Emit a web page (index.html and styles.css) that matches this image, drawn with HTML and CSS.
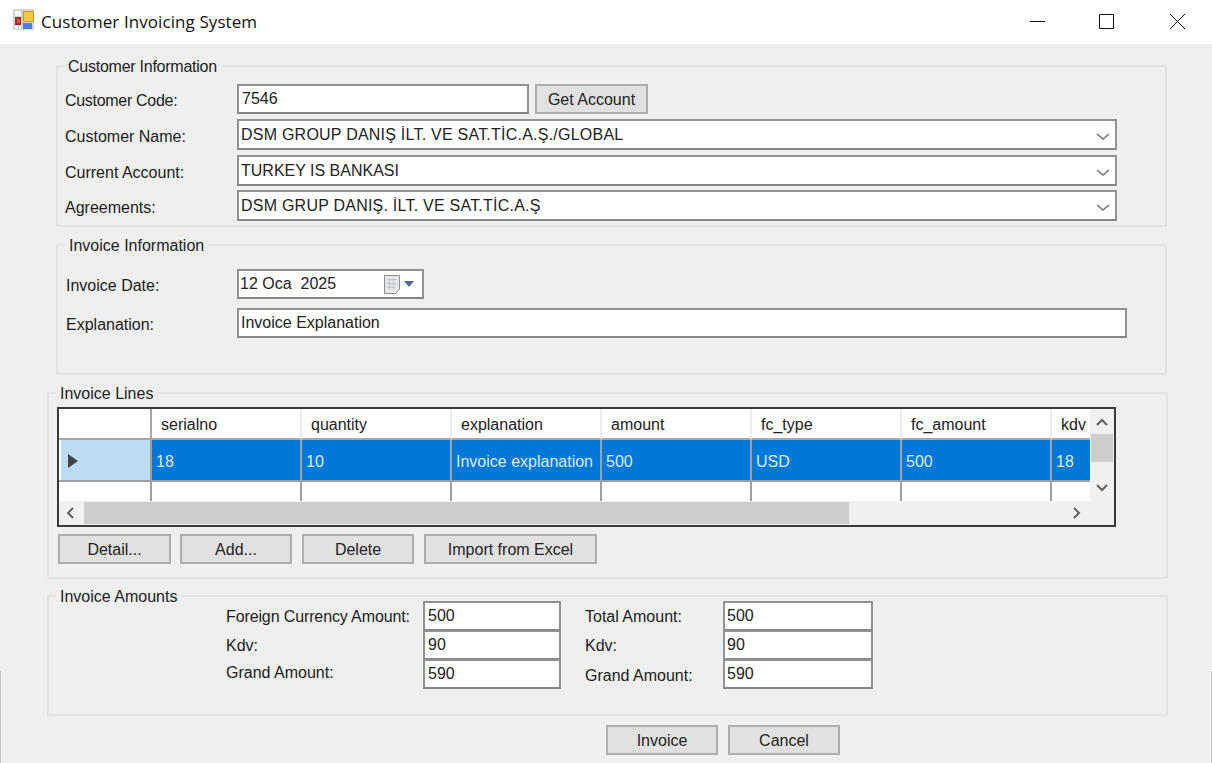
FILE: index.html
```html
<!DOCTYPE html>
<html lang="en">
  <head>
    <meta charset="UTF-8" />
    <title>Customer Invoicing System</title>
    <link rel="stylesheet" href="styles.css">
  </head>
  <body>
    <header class="titlebar">
      <svg class="app-icon" width="21" height="21" viewBox="0 0 21 21">
        <rect width="21" height="21" fill="#d4d4d4" />
        <rect x="2" y="2" width="6" height="5" fill="#f7f7f7" />
        <rect x="2" y="17" width="3" height="3" fill="#f7f7f7" />
        <rect x="6" y="17" width="2" height="3" fill="#f7f7f7" />
        <rect x="10" y="2" width="11" height="11" fill="#c69a1e" />
        <rect x="11" y="3" width="9" height="9" fill="#f5c93e" />
        <rect x="2" y="8" width="6" height="8" fill="#a82a22" />
        <rect x="4" y="10" width="3" height="4" fill="#d8524a" />
        <rect x="10" y="14" width="9" height="6" fill="#4a80d8" />
      </svg>
      <span class="app-title">Customer Invoicing System</span>
      <div class="window-buttons">
        <svg width="15" height="15" viewBox="0 0 15 15"><path d="M0 7.5H15" stroke="#111" fill="none" /></svg>
        <svg width="15" height="15" viewBox="0 0 15 15"><path d="M.5 .5H14.500V14.500H.5Z" stroke="#111" fill="none" /></svg>
        <svg class="close-icon" width="15" height="15" viewBox="0 0 15 15"><path d="M0 0L15 15M15 0L0 15" stroke="#111" fill="none" /></svg>
      </div>
    </header>

    <main class="content">
      <fieldset class="group group-customer">
        <legend>Customer Information</legend>
        <div class="row row-code">
          <label>Customer Code:</label>
          <div class="field field-code">7546</div>
          <button class="btn btn-account">Get Account</button>
        </div>
        <div class="row row-name">
          <label>Customer Name:</label>
          <div class="field combo combo-spaced">DSM GROUP DANIŞ İLT. VE SAT.TİC.A.Ş./GLOBAL
            <svg width="14" height="7" viewBox="0 0 14 7"><path d="M1 1L7 6L13 1" stroke="#777" stroke-width="1.600" fill="none" /></svg>
          </div>
        </div>
        <div class="row row-account">
          <label>Current Account:</label>
          <div class="field combo">TURKEY IS BANKASI
            <svg width="14" height="7" viewBox="0 0 14 7"><path d="M1 1L7 6L13 1" stroke="#777" stroke-width="1.600" fill="none" /></svg>
          </div>
        </div>
        <div class="row row-agreement">
          <label>Agreements:</label>
          <div class="field combo combo-spaced">DSM GRUP DANIŞ. İLT. VE SAT.TİC.A.Ş
            <svg width="14" height="7" viewBox="0 0 14 7"><path d="M1 1L7 6L13 1" stroke="#777" stroke-width="1.600" fill="none" /></svg>
          </div>
        </div>
      </fieldset>

      <fieldset class="group group-invoice">
        <legend>Invoice Information</legend>
        <div class="row row-date">
          <label>Invoice Date:</label>
          <div class="field field-date">
            <span>12 Oca&nbsp; 2025</span>
            <svg class="cal-icon" width="30" height="19" viewBox="0 0 30 19">
              <path d="M.5 .5H15.500V14L12 18.500H.5Z" fill="#e6e6e6" stroke="#8f8f8f" />
              <path d="M3 4.500H13M3 8.500H13M3 12.500H11M5.500 3V15M9.500 3V15" stroke="#c3c8d0" fill="none" />
              <path d="M20 6H30L25 12Z" fill="#4b6c94" />
            </svg>
          </div>
        </div>
        <div class="row row-explain">
          <label>Explanation:</label>
          <div class="field field-explain">Invoice Explanation</div>
        </div>
      </fieldset>

      <fieldset class="group group-wide group-lines">
        <legend>Invoice Lines</legend>
        <div class="grid-frame">
          <div class="grid-data">
            <table>
              <thead>
                <tr>
                  <th class="row-head"></th>
                  <th>serialno</th>
                  <th>quantity</th>
                  <th>explanation</th>
                  <th>amount</th>
                  <th>fc_type</th>
                  <th>fc_amount</th>
                  <th>kdv</th>
                </tr>
              </thead>
              <tbody>
                <tr class="selected">
                  <td class="row-head"><span class="row-arrow"></span></td>
                  <td>18</td>
                  <td>10</td>
                  <td>Invoice explanation</td>
                  <td>500</td>
                  <td>USD</td>
                  <td>500</td>
                  <td>18</td>
                </tr>
                <tr class="new-row">
                  <td class="row-head"></td>
                  <td></td><td></td><td></td><td></td><td></td><td></td><td></td>
                </tr>
              </tbody>
            </table>
          </div>
          <div class="vscroll">
            <svg width="12" height="8" viewBox="0 0 12 8"><path d="M1 7L6 2L11 7" stroke="#606060" stroke-width="2" fill="none" /></svg>
            <div class="vthumb"></div>
            <svg class="vdown" width="12" height="8" viewBox="0 0 12 8"><path d="M1 1L6 6L11 1" stroke="#606060" stroke-width="2" fill="none" /></svg>
          </div>
          <div class="hscroll">
            <svg width="8" height="12" viewBox="0 0 8 12"><path d="M7 1L2 6L7 11" stroke="#606060" stroke-width="2" fill="none" /></svg>
            <div class="hthumb"></div>
            <svg width="8" height="12" viewBox="0 0 8 12"><path d="M1 1L6 6L1 11" stroke="#606060" stroke-width="2" fill="none" /></svg>
          </div>
          <div class="corner"></div>
        </div>
        <div class="line-buttons">
          <button class="btn btn-line btn-detail">Detail...</button>
          <button class="btn btn-line">Add...</button>
          <button class="btn btn-line">Delete</button>
          <button class="btn btn-excel">Import from Excel</button>
        </div>
      </fieldset>

      <fieldset class="group group-wide group-amounts">
        <legend>Invoice Amounts</legend>
        <div class="amounts">
          <div class="amount-col col-foreign">
            <div class="amount-row"><label class="label-foreign">Foreign Currency Amount:</label><div class="field">500</div></div>
            <div class="amount-row"><label>Kdv:</label><div class="field">90</div></div>
            <div class="amount-row"><label class="raise">Grand Amount:</label><div class="field">590</div></div>
          </div>
          <div class="amount-col col-total">
            <div class="amount-row"><label>Total Amount:</label><div class="field">500</div></div>
            <div class="amount-row"><label>Kdv:</label><div class="field">90</div></div>
            <div class="amount-row"><label class="raise-small">Grand Amount:</label><div class="field">590</div></div>
          </div>
        </div>
      </fieldset>

      <div class="footer-buttons">
        <button class="btn btn-line">Invoice</button>
        <button class="btn btn-line">Cancel</button>
      </div>
    </main>
  </body>
</html>
```

FILE: styles.css
```css
* {
  box-sizing: border-box;
}

html,
body {
  height: 100%;
}

body {
  margin: 0;
  background-color: #efefef;
  color: #1c1c1c;
  font-family: "Liberation Sans", Arial, sans-serif;
  font-size: 16px;
  overflow: hidden;
  position: relative;
}

/* thin window edge at the bottom corners */
body::before,
body::after {
  content: "";
  position: absolute;
  top: 671px;
  bottom: 0;
  width: 1px;
  background-color: #c4c4c4;
}

body::before {
  left: 0;
}

body::after {
  right: 0;
}

.titlebar {
  height: 44px;
  background-color: white;
  display: flex;
  align-items: center;
  padding-left: 13px;
}

.app-icon {
  margin-top: -5px;
}

.app-title {
  margin: -2px 0 0 7px;
  font-family: "Open Sans", sans-serif;
  font-size: 17px;
  letter-spacing: 0.08px;
  color: #111;
}

.window-buttons {
  margin-left: auto;
  display: flex;
  gap: 54px;
  padding-right: 27px;
  margin-top: -2px;
}

.close-icon {
  margin-left: 2px;
}

.group {
  margin: 9px 0 0 56px;
  width: 1111px;
  padding: 0 7px;
  border: 2px solid #e3e3e3;
  min-width: 0;
}

.group legend {
  margin-left: 0;
  padding: 0 4px;
  height: 18px;
  line-height: 20px;
  color: #222;
}

.group-customer legend {
  margin-left: -1px;
  letter-spacing: -0.25px;
}

.group-customer {
  margin-top: 13px;
  height: 170px;
  padding-top: 9px;
}

.group-invoice {
  height: 139px;
  padding-top: 15px;
}

.group-wide {
  margin-left: 47px;
  width: 1121px;
  padding: 0 8px;
}

.group-wide legend {
  margin-left: -1px;
}

.group-lines {
  height: 195px;
  padding-top: 5px;
}

.group-amounts {
  margin-top: 8px;
  height: 129px;
}

.row {
  display: flex;
  align-items: center;
}

.row label {
  width: 172px;
  flex: none;
  padding-top: 4px;
}

.row-code label {
  letter-spacing: -0.3px;
}

.row-name {
  margin-top: 5px;
}

.row-account {
  margin-top: 5px;
}

.row-agreement {
  margin-top: 4px;
}

.row-date label,
.row-explain label {
  margin-left: 1px;
  width: 171px;
}

.row-explain {
  margin-top: 9px;
}

.field {
  height: 30px;
  background-color: white;
  border: 2px solid #929292;
  border-bottom-color: #858585;
  padding: 0 3px;
  display: flex;
  align-items: center;
  color: #222;
  white-space: nowrap;
}

.field-code {
  width: 292px;
}

.combo {
  width: 880px;
  height: 31px;
  justify-content: space-between;
  padding-left: 2px;
  padding-right: 5px;
}

.combo-spaced {
  letter-spacing: 0.23px;
}

.combo svg {
  margin-top: 3px;
}

.field-date {
  width: 187px;
  padding-left: 1px;
  justify-content: space-between;
  padding-right: 8px;
}

.cal-icon {
  margin-top: 0;
}

.field-explain {
  width: 890px;
  padding-left: 2px;
}

.btn {
  height: 30px;
  background-color: #e1e1e1;
  border: 2px solid #adadad;
  color: #222;
  font-family: inherit;
  font-size: 16px;
  padding: 2px 0 0;
}

.btn-account {
  width: 113px;
  margin: -1px 0 0 6px;
}

.btn-line {
  width: 112px;
}

.btn-detail {
  width: 113px;
  margin-right: -1px;
}

.btn-excel {
  width: 173px;
}

.grid-frame {
  width: 1059px;
  height: 120px;
  border: 2px solid #3a3a3a;
  background-color: #f0f0f0;
  display: grid;
  grid-template-columns: 1031px 24px;
  grid-template-rows: 92px 24px;
}

.grid-data {
  overflow: hidden;
  background-color: white;
}

table {
  border-collapse: separate;
  border-spacing: 0;
  table-layout: fixed;
  width: 1143px;
}

th,
td {
  width: 150px;
  padding: 0;
  text-align: left;
  font-weight: normal;
  white-space: nowrap;
  overflow: hidden;
}

th {
  height: 31px;
  padding: 3px 0 0 9px;
  border-right: 2px solid #ececec;
  border-bottom: 2px solid #a8a8a8;
  color: #222;
}

th.row-head {
  width: 93px;
  border-right-color: #a8a8a8;
}

td {
  height: 42px;
  padding: 3px 0 0 4px;
  border-right: 2px solid #a0a0a0;
  border-bottom: 2px solid #a0a0a0;
}

td.row-head {
  width: 93px;
  padding: 0 0 0 2px;
}

.selected td {
  background-color: #0078d7;
  color: #dcecfa;
}

.selected td.row-head {
  background-clip: content-box;
  background-color: #bcdcf4;
}

.row-arrow {
  display: block;
  width: 0;
  height: 0;
  margin: 2px 0 0 7px;
  border-left: 10px solid #444;
  border-top: 7px solid transparent;
  border-bottom: 7px solid transparent;
}

.new-row td {
  height: 19px;
  border-bottom: 0;
}

.vscroll {
  display: flex;
  flex-direction: column;
  align-items: center;
  padding-top: 9px;
}

.vthumb {
  width: 22px;
  height: 28px;
  margin-top: 8px;
  background-color: #cdcdcd;
}

.vdown {
  margin-top: 22px;
}

.hscroll {
  display: flex;
  align-items: center;
  justify-content: space-between;
  padding: 0 9px 0 7px;
}

.hthumb {
  width: 765px;
  height: 22px;
  margin: 0 auto 0 10px;
  background-color: #cdcdcd;
}

.corner {
  background-color: #f0f0f0;
}

.line-buttons {
  display: flex;
  gap: 10px;
  margin: 7px 0 0 1px;
}

.amounts {
  display: flex;
  margin: -4px 0 0 169px;
  gap: 24px;
}

.amount-row {
  display: flex;
  align-items: center;
}

.amount-row + .amount-row {
  margin-top: -1px;
}

.amount-row .field {
  padding-left: 2px;
}

.amount-row label {
  padding-top: 2px;
}

.label-foreign {
  letter-spacing: -0.12px;
}

.col-foreign label {
  width: 197px;
}

.col-foreign .field {
  width: 138px;
  padding-left: 3px;
}

.col-total label {
  width: 138px;
}

.col-total .field {
  width: 150px;
}

.raise {
  margin-top: -4px;
}

.raise-small {
  margin-top: 2px;
}

.footer-buttons {
  display: flex;
  gap: 10px;
  margin: 9px 0 0 606px;
}
```
